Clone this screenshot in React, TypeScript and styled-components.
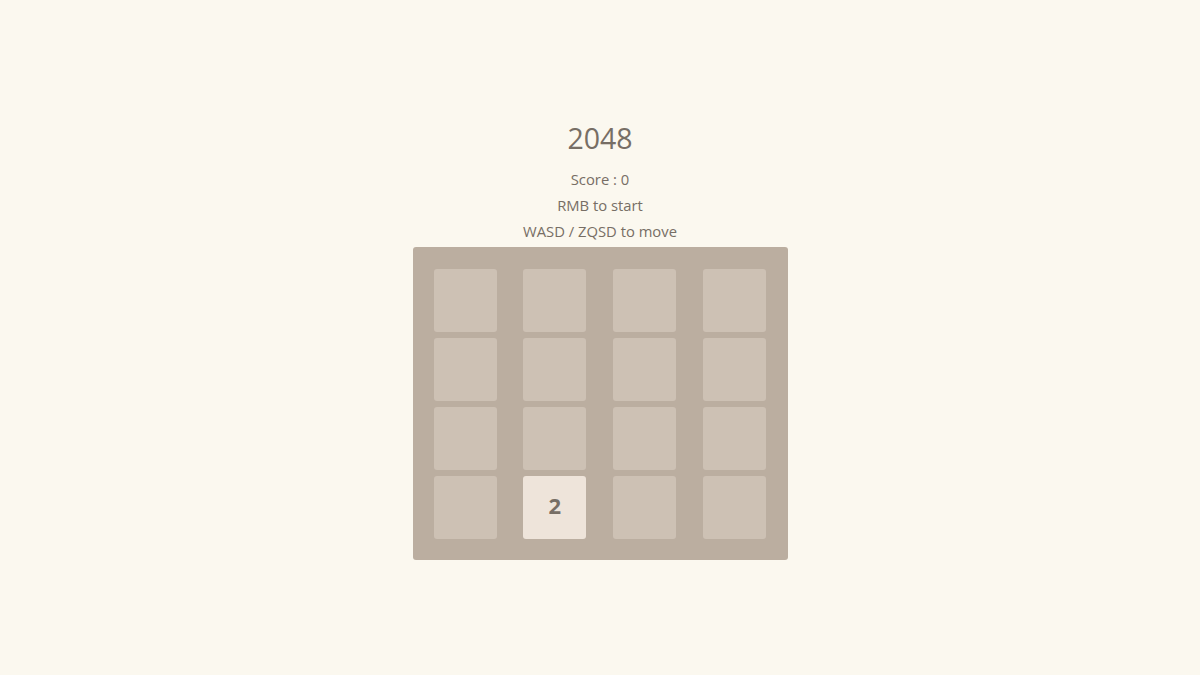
import React from "react";
import styled, { createGlobalStyle } from "styled-components";

const Global = createGlobalStyle`
  html, body { margin: 0; padding: 0; background: #fbf8ef; }
  body { font-family: "Open Sans", "Noto Sans", "Liberation Sans", sans-serif; color: #776e65; }
`;

const Page = styled.main`
  display: flex;
  flex-direction: column;
  align-items: center;
  padding-top: 120px;
  min-height: 100vh;
  box-sizing: border-box;
`;

const Title = styled.h1`
  margin: 0 0 10px;
  font-size: 28.5px;
  line-height: 36px;
  font-weight: 400;
  color: #776e65;
`;

const Info = styled.p`
  margin: 0;
  font-size: 14.8px;
  line-height: 26px;
  color: #776e65;
`;

const Board = styled.div`
  margin-top: 3px;
  width: 375px;
  height: 313px;
  box-sizing: border-box;
  padding: 22px 22px 22px 21px;
  background: #bbaea0;
  border-radius: 3px;
  display: grid;
  grid-template-columns: repeat(4, 63px);
  grid-template-rows: repeat(4, 63px);
  column-gap: 26.9px;
  row-gap: 6px;
`;

const Tile = styled.div<{ $value: number }>`
  border-radius: 3px;
  background: ${(p) => (p.$value === 2 ? "#eee4da" : "#cdc1b4")};
  display: flex;
  align-items: center;
  justify-content: center;
  padding-bottom: 5px;
  box-sizing: border-box;
  font-size: 22px;
  line-height: 1;
  font-weight: 700;
  color: #776e65;
`;

const cells = [
  0, 0, 0, 0,
  0, 0, 0, 0,
  0, 0, 0, 0,
  0, 2, 0, 0,
];

export default function App() {
  return (
    <>
      <Global />
      <Page>
        <Title>2048</Title>
        <Info>Score : 0</Info>
        <Info>RMB to start</Info>
        <Info>WASD / ZQSD to move</Info>
        <Board>
          {cells.map((v, i) => (
            <Tile key={i} $value={v}>
              {v ? v : ""}
            </Tile>
          ))}
        </Board>
      </Page>
    </>
  );
}
